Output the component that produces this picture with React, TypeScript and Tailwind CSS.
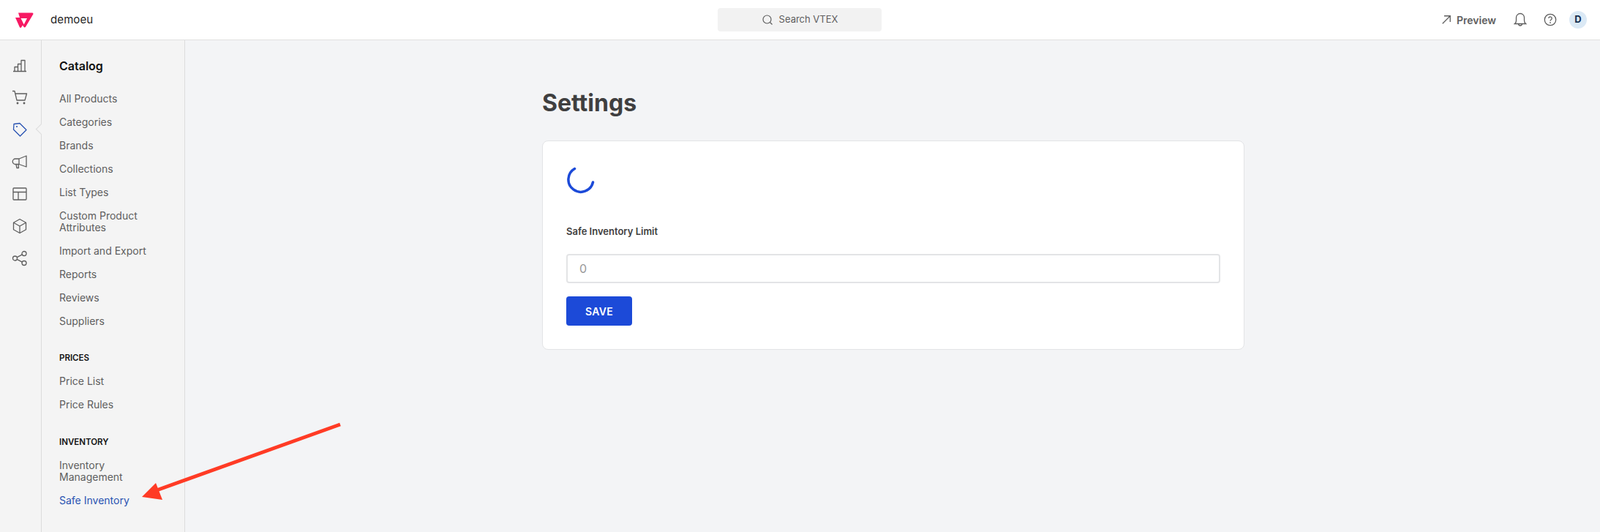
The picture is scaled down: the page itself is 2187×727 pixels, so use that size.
const railIcons = [
  <g key="chart">
    <path d="M3 20.500h18M5 20.500v-6h4.500v6M9.500 20.500v-10H14v10M14 20.500v-15h5v15" />
  </g>,
  <g key="cart">
    <path d="M2 3.500h3l3 12.500h11l2.500-9H6" />
    <circle cx="9" cy="20" r="0.800" />
    <circle cx="18" cy="20" r="0.800" />
  </g>,
  <g key="tag">
    <path d="M4 4.500l8-1 9 9-8.500 8.500-9-9z" />
    <circle cx="8" cy="8" r="0.400" />
  </g>,
  <g key="megaphone">
    <path d="M21 4v15l-10-3.500H6a3 3 0 0 1 0-7.500h5z" />
    <path d="M7 15.500l1 5h2.500l-.5-5M11 8v7.500" />
  </g>,
  <g key="layout">
    <rect x="3" y="4" width="18" height="16" rx="1" />
    <path d="M3 9.500h18M10 9.500V20" />
  </g>,
  <g key="box">
    <path d="M12 2.500l8.500 4.700v9.600L12 21.500l-8.500-4.700V7.200z" />
    <path d="M3.500 7.200L12 12l8.500-4.800M12 12v9.500" />
  </g>,
  <g key="share">
    <circle cx="5.500" cy="12" r="3" />
    <circle cx="18" cy="5.500" r="3" />
    <circle cx="18" cy="18.500" r="3" />
    <path d="M8.200 10.600l7.100-3.700M8.200 13.400l7.100 3.700" />
  </g>,
];

const catalogItems = [
  "All Products",
  "Categories",
  "Brands",
  "Collections",
  "List Types",
  "Custom Product Attributes",
  "Import and Export",
  "Reports",
  "Reviews",
  "Suppliers",
];

function NavLink({ label, active }: { label: string; active?: boolean }) {
  return (
    <a className={`block text-[14px] leading-4 ${active ? "text-[#2953b2]" : "text-[#5e5e5e]"}`}>
      {label}
    </a>
  );
}

function SectionTitle({ label }: { label: string }) {
  return <p className="text-[11.5px] font-semibold leading-4 text-[#111111]">{label}</p>;
}

export default function App() {
  return (
    <div className="relative flex h-screen flex-col overflow-hidden bg-[#f3f4f6] font-['Inter',sans-serif]">
      <header className="flex h-[55px] shrink-0 items-center justify-between border-b border-[#e0e0e0] bg-white pl-[21px] pr-[18px]">
        <div className="flex w-[396px] items-center gap-[23px]">
          <svg width="25" height="21" viewBox="0 0 25 21" fill="#f71963" fillRule="evenodd">
            <path d="M4 .500H22.800c1.300 0 2 1 1.500 2L14 19.800c-.6 1-2 1-2.600 0L10 17.500l-1.800 2.800c-.5.900-1.700.9-2.300 0L0 7h6zM7.500 8l4.200 8.500L16 8z" />
          </svg>
          <span className="text-[15px] tracking-[0.1px] text-[#1f1f1f]">demoeu</span>
        </div>
        <div className="flex h-8 w-[224px] items-center justify-center gap-2 rounded bg-[#f2f2f2] text-[13px] text-[#5e5e5e]">
          <svg width="16" height="16" viewBox="0 0 16 16" fill="none" stroke="#5e5e5e" strokeWidth="1.200">
            <circle cx="7.500" cy="7.500" r="5.500" />
            <path d="M11.500 11.500l3 3" />
          </svg>
          Search VTEX
        </div>
        <div className="flex w-[400px] items-center justify-end text-[#5e5e5e]">
          <svg width="14" height="14" viewBox="0 0 16 16" fill="none" stroke="currentColor" strokeWidth="1.500">
            <path d="M2 14L14 2M4.500 2H14v9.500" />
          </svg>
          <span className="ml-[7px] text-[14px] font-semibold">Preview</span>
          <svg className="ml-[24px]" width="18" height="20" viewBox="0 0 18 20" fill="none" stroke="currentColor" strokeWidth="1.300">
            <path d="M1.500 15.500c1.500-1.200 2-2.500 2-4.500V7a5.500 5.500 0 0 1 11 0v4c0 2 .5 3.300 2 4.500z" />
            <path d="M6.500 15.500c0 3.300 5 3.300 5 0" />
          </svg>
          <svg className="ml-[23px]" width="18" height="18" viewBox="0 0 18 18" fill="none" stroke="currentColor" strokeWidth="1.300">
            <circle cx="9" cy="9" r="7.700" />
            <path d="M6.800 7a2.200 2.200 0 1 1 3.300 2c-.8.500-1.100.9-1.100 1.800" />
            <circle cx="9" cy="13" r="0.300" />
          </svg>
          <span className="ml-[17px] flex size-6 items-center justify-center rounded-full bg-[#dbe9f5] text-[13px] font-bold text-[#142f4f]">
            D
          </span>
        </div>
      </header>

      <div className="flex min-h-0 flex-1">
        <nav className="flex w-[57px] shrink-0 flex-col items-center gap-5 border-r border-[#dcdcdc] bg-[#f4f4f4] pt-[22px] pr-[2px]">
          {railIcons.map((icon, i) => (
            <div key={i} className="relative">
              <svg
                width="24"
                height="24"
                viewBox="0 0 24 24"
                fill="none"
                stroke={i === 2 ? "#2953b2" : "#5e5e5e"}
                strokeWidth="1.300"
                strokeLinejoin="round"
              >
                {icon}
              </svg>
              {i === 2 && (
                <span className="absolute left-[36px] top-[6px] size-[11px] rotate-45 border-b border-l border-[#dcdcdc] bg-[#f4f4f4]" />
              )}
            </div>
          ))}
        </nav>

        <aside className="w-[196px] shrink-0 border-r border-[#dcdcdc] bg-[#f4f4f4] pl-[24px] pr-[30px] pt-[26px]">
          <h2 className="text-[16px] font-semibold leading-[18px] text-[#111111]">Catalog</h2>
          <div className="mt-[28px] flex flex-col gap-4">
            {catalogItems.map((item) => (
              <NavLink key={item} label={item} />
            ))}
          </div>
          <div className="mt-[34px] flex flex-col gap-[16px]">
            <SectionTitle label="PRICES" />
            <NavLink label="Price List" />
            <NavLink label="Price Rules" />
          </div>
          <div className="mt-[35px] flex flex-col gap-[16px]">
            <SectionTitle label="INVENTORY" />
            <NavLink label="Inventory Management" />
            <NavLink label="Safe Inventory" active />
          </div>
        </aside>

        <main className="flex-1 pl-[488px] pt-[67px]">
          <div className="w-[960px]">
            <h1 className="text-[32px] font-bold leading-[38px] text-[#3f3f40]">Settings</h1>
            <section className="mt-8 rounded-lg border border-[#e3e4e6] bg-white px-8 pb-8 pt-[34px]">
              <svg className="ml-px" width="38" height="38" viewBox="0 0 38 38" fill="none" stroke="#1c4ad8" strokeWidth="3.500">
                <path d="M10.500 3.500A17 17 0 1 0 35.500 22" strokeLinecap="round" />
              </svg>
              <label className="mt-[43px] block text-[13px] font-semibold leading-4 text-[#3f3f40]">
                Safe Inventory Limit
              </label>
              <input
                placeholder="0"
                className="mt-[23px] block h-10 w-full rounded border-2 border-[#e3e4e6] bg-white px-4 text-[16px] placeholder:text-[#979899]"
              />
              <button className="mt-[18px] block h-10 w-[90px] rounded bg-[#1c4ad8] text-[14px] font-semibold tracking-[0.3px] text-white">
                SAVE
              </button>
            </section>
          </div>
        </main>
      </div>

      <svg className="pointer-events-none absolute left-[190px] top-[575px]" width="280" height="110" viewBox="190 575 280 110">
        <path d="M465 580L214 670" stroke="#ff3b25" strokeWidth="5" />
        <path d="M194 679L213 660L222 683z" fill="#ff3b25" />
      </svg>
    </div>
  );
}
